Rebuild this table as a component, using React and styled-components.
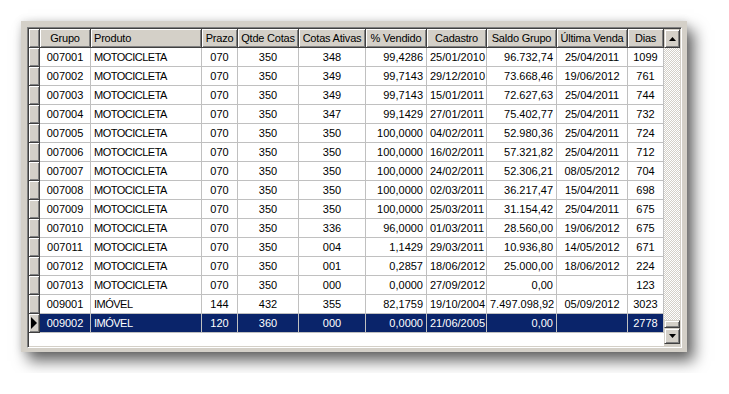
import React from 'react';
import styled, { createGlobalStyle } from 'styled-components';

const GlobalStyle = createGlobalStyle`
  body {
    margin: 0;
    background: #ffffff;
    font-family: "Liberation Sans", Arial, sans-serif;
  }
`;

const columns = [
  { key: 'grupo', title: 'Grupo', width: 51, align: 'center', headAlign: 'center' },
  { key: 'produto', title: 'Produto', width: 111, align: 'left', headAlign: 'left', tight: true },
  { key: 'prazo', title: 'Prazo', width: 36, align: 'center', headAlign: 'center' },
  { key: 'qtde', title: 'Qtde Cotas', width: 61, align: 'center', headAlign: 'center' },
  { key: 'ativas', title: 'Cotas Ativas', width: 67, align: 'center', headAlign: 'center' },
  { key: 'vendido', title: '% Vendido', width: 61, align: 'right', headAlign: 'center' },
  { key: 'cadastro', title: 'Cadastro', width: 60, align: 'left', headAlign: 'center' },
  { key: 'saldo', title: 'Saldo Grupo', width: 70, align: 'right', headAlign: 'center' },
  { key: 'ultima', title: 'Última Venda', width: 71, align: 'center', headAlign: 'center' },
  { key: 'dias', title: 'Dias', width: 36, align: 'center', headAlign: 'center' },
];

const template = `11px ${columns.map((c) => `${c.width}px`).join(' ')}`;

const M = 'MOTOCICLETA';
const rows = [
  ['007001', M, '070', '350', '348', '99,4286', '25/01/2010', '96.732,74', '25/04/2011', '1099'],
  ['007002', M, '070', '350', '349', '99,7143', '29/12/2010', '73.668,46', '19/06/2012', '761'],
  ['007003', M, '070', '350', '349', '99,7143', '15/01/2011', '72.627,63', '25/04/2011', '744'],
  ['007004', M, '070', '350', '347', '99,1429', '27/01/2011', '75.402,77', '25/04/2011', '732'],
  ['007005', M, '070', '350', '350', '100,0000', '04/02/2011', '52.980,36', '25/04/2011', '724'],
  ['007006', M, '070', '350', '350', '100,0000', '16/02/2011', '57.321,82', '25/04/2011', '712'],
  ['007007', M, '070', '350', '350', '100,0000', '24/02/2011', '52.306,21', '08/05/2012', '704'],
  ['007008', M, '070', '350', '350', '100,0000', '02/03/2011', '36.217,47', '15/04/2011', '698'],
  ['007009', M, '070', '350', '350', '100,0000', '25/03/2011', '31.154,42', '25/04/2011', '675'],
  ['007010', M, '070', '350', '336', '96,0000', '01/03/2011', '28.560,00', '19/06/2012', '675'],
  ['007011', M, '070', '350', '004', '1,1429', '29/03/2011', '10.936,80', '14/05/2012', '671'],
  ['007012', M, '070', '350', '001', '0,2857', '18/06/2012', '25.000,00', '18/06/2012', '224'],
  ['007013', M, '070', '350', '000', '0,0000', '27/09/2012', '0,00', '', '123'],
  ['009001', 'IMÓVEL', '144', '432', '355', '82,1759', '19/10/2004', '7.497.098,92', '05/09/2012', '3023'],
  ['009002', 'IMÓVEL', '120', '360', '000', '0,0000', '21/06/2005', '0,00', '', '2778'],
];

const selectedIndex = 14;

const App = () => {
  return (
    <Page>
      <GlobalStyle />
      <Window>
        <Sunken>
          <GridArea>
            <Row>
              <IndicatorCell />
              {columns.map((c) => (
                <HeaderCell key={c.key} $align={c.headAlign}>{c.title}</HeaderCell>
              ))}
            </Row>
            {rows.map((r, i) => (
              <Row key={r[0]}>
                <IndicatorCell>
                  {i === selectedIndex && (
                    <svg width="6" height="12" viewBox="0 0 6 12">
                      <polygon points="0,0 6,6 0,12" fill="#000" />
                    </svg>
                  )}
                </IndicatorCell>
                {r.map((v, j) => (
                  <Cell
                    key={columns[j].key}
                    $align={columns[j].align}
                    $tight={columns[j].tight}
                    $selected={i === selectedIndex}
                  >
                    {v}
                  </Cell>
                ))}
              </Row>
            ))}
          </GridArea>
          <ScrollBar>
            <ScrollButton $tall>
              <svg width="7" height="4" viewBox="0 0 7 4">
                <polygon points="3.5,0 7,4 0,4" fill="#000" />
              </svg>
            </ScrollButton>
            <Track />
            <Thumb />
            <ScrollButton>
              <svg width="7" height="4" viewBox="0 0 7 4">
                <polygon points="0,0 7,0 3.5,4" fill="#000" />
              </svg>
            </ScrollButton>
            <ScrollFoot />
          </ScrollBar>
        </Sunken>
      </Window>
    </Page>
  );
};

export default App;

const Page = styled.div`
  padding: 21px;
`;

const Window = styled.div`
  width: 666px;
  height: 331px;
  box-sizing: border-box;
  padding: 6px 5px 4px 6px;
  background: #d4d0c8;
  box-shadow: 7px 9px 14px rgba(0, 0, 0, 0.6), 0 0 8px rgba(0, 0, 0, 0.12);
`;

const Sunken = styled.div`
  display: flex;
  height: 100%;
  box-sizing: border-box;
  border-top: 1px solid #808080;
  border-left: 1px solid #808080;
  border-right: 1px solid #ffffff;
  border-bottom: 1px solid #ffffff;
  box-shadow: inset 1px 1px #404040, inset -1px -1px #d4d0c8;
  padding: 1px;
`;

const GridArea = styled.div`
  flex: 1;
  background: #ffffff;
  overflow: hidden;
`;

const Row = styled.div`
  display: grid;
  grid-template-columns: ${template};
  height: 19px;
`;

const IndicatorCell = styled.div`
  box-sizing: border-box;
  height: 19px;
  background: #d4d0c8;
  border-right: 1px solid #404040;
  border-bottom: 1px solid #404040;
  box-shadow: inset 1px 1px #ffffff, inset -1px -1px #808080;
  display: flex;
  align-items: center;
  padding-left: 2px;
`;

const HeaderCell = styled.div`
  box-sizing: border-box;
  height: 19px;
  background: #d4d0c8;
  border-right: 1px solid #404040;
  border-bottom: 1px solid #404040;
  box-shadow: inset 1px 1px #ffffff, inset -1px -1px #808080;
  font-size: 11px;
  line-height: 18px;
  letter-spacing: -0.2px;
  color: #000;
  text-align: ${(p) => p.$align};
  padding: ${(p) => (p.$align === 'left' ? '0 1px 0 3px' : '0 1px')};
  white-space: nowrap;
  overflow: hidden;
`;

const Cell = styled.div`
  box-sizing: border-box;
  height: 19px;
  background: ${(p) => (p.$selected ? '#0a246a' : '#ffffff')};
  color: ${(p) => (p.$selected ? '#ffffff' : '#000000')};
  border-right: 1px solid #c0c0c0;
  border-bottom: 1px solid #c0c0c0;
  font-size: 11px;
  line-height: 18px;
  letter-spacing: ${(p) => (p.$tight ? '-0.5px' : '0')};
  text-align: ${(p) => p.$align};
  padding: 0 3px;
  white-space: nowrap;
  overflow: hidden;
`;

const ScrollBar = styled.div`
  width: 16px;
  display: flex;
  flex-direction: column;
`;

const ScrollButton = styled.div`
  box-sizing: border-box;
  height: ${(p) => (p.$tall ? '19px' : '16px')};
  background: #d4d0c8;
  border-top: 1px solid #d4d0c8;
  border-left: 1px solid #d4d0c8;
  border-right: 1px solid #404040;
  border-bottom: 1px solid #404040;
  box-shadow: inset 1px 1px #ffffff, inset -1px -1px #808080;
  display: flex;
  align-items: center;
  justify-content: center;
`;

const Track = styled.div`
  flex: 1;
  background: repeating-conic-gradient(#d4d0c8 0 25%, #ffffff 0 50%);
  background-size: 2px 2px;
`;

const Thumb = styled(ScrollButton)`
  height: 8px;
`;

const ScrollFoot = styled.div`
  height: 2px;
  background: #d4d0c8;
`;
